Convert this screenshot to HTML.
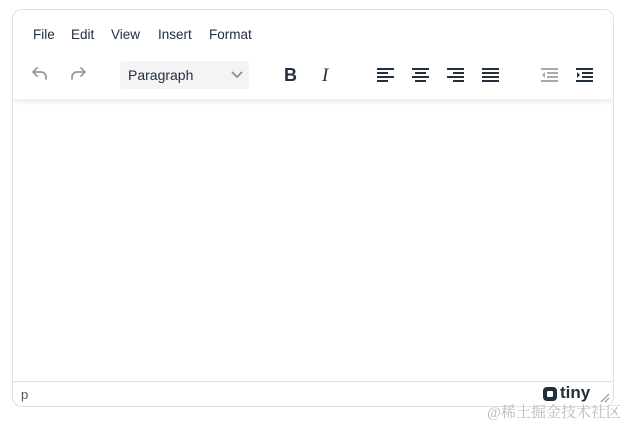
<!DOCTYPE html>
<html><head><meta charset="utf-8"><style>
body{margin:0;width:625px;height:423px;background:#fff;font-family:"Liberation Sans",sans-serif;position:relative;overflow:hidden}
.box{position:absolute;left:12px;top:9px;width:600px;height:396px;border:1px solid #e0e0e0;border-radius:10px;overflow:hidden}
.hdr{position:absolute;left:0;top:0;width:600px;height:89px;box-shadow:0 3px 5px rgba(0,0,0,.08);background:#fff}
.menu{position:absolute;top:17px;font-size:13.5px;color:#222f3e}
.sel{position:absolute;left:107px;top:51px;width:129px;height:28px;background:#f4f4f4;border-radius:3px}
.sel span{position:absolute;left:8px;top:6px;font-size:14px;color:#222f3e}
svg{position:absolute}
.status{position:absolute;left:0;top:371px;width:600px;border-top:1px solid #e0e0e0;height:25px}
.wm{position:absolute;right:4px;top:401px;font-size:15px;color:#bbb;font-family:"Liberation Serif","Noto Serif CJK SC",serif}
</style></head><body>
<div class="box">
<div class="hdr">
<div class="menu" style="left:20px">File</div>
<div class="menu" style="left:58px">Edit</div>
<div class="menu" style="left:98px">View</div>
<div class="menu" style="left:145px">Insert</div>
<div class="menu" style="left:196px">Format</div>
<svg style="left:18px;top:55px" width="20" height="20" viewBox="0 0 20 20"><path d="M6 3L2 7l4 4M2 7h8a5 5 0 0 1 5 5v2" fill="none" stroke="#999" stroke-width="1.8" stroke-linecap="round" stroke-linejoin="round"/></svg>
<svg style="left:54px;top:55px" width="20" height="20" viewBox="0 0 20 20"><path d="M14 3l4 4-4 4M18 7h-8a5 5 0 0 0-5 5v2" fill="none" stroke="#999" stroke-width="1.8" stroke-linecap="round" stroke-linejoin="round"/></svg>
<div class="sel"><span>Paragraph</span><svg style="left:111px;top:10px" width="12" height="8" viewBox="0 0 12 8"><path d="M1 1l5 5 5-5" fill="none" stroke="#888" stroke-width="1.6"/></svg></div>
<div style="position:absolute;left:271px;top:55px;font-weight:bold;font-size:18px;color:#222f3e">B</div>
<div style="position:absolute;left:309px;top:55px;font-style:italic;font-family:'Liberation Serif',serif;font-size:19px;color:#222f3e">I</div>
<svg style="left:364px;top:57px" width="18" height="16"><g fill="#222f3e"><rect x="0" y="1" width="17" height="2"/><rect x="0" y="5" width="11" height="2"/><rect x="0" y="9" width="17" height="2"/><rect x="0" y="13" width="11" height="2"/></g></svg>
<svg style="left:399px;top:57px" width="18" height="16"><g fill="#222f3e"><rect x="0" y="1" width="17" height="2"/><rect x="3" y="5" width="11" height="2"/><rect x="0" y="9" width="17" height="2"/><rect x="3" y="13" width="11" height="2"/></g></svg>
<svg style="left:434px;top:57px" width="18" height="16"><g fill="#222f3e"><rect x="0" y="1" width="17" height="2"/><rect x="6" y="5" width="11" height="2"/><rect x="0" y="9" width="17" height="2"/><rect x="6" y="13" width="11" height="2"/></g></svg>
<svg style="left:469px;top:57px" width="18" height="16"><g fill="#222f3e"><rect x="0" y="1" width="17" height="2"/><rect x="0" y="5" width="17" height="2"/><rect x="0" y="9" width="17" height="2"/><rect x="0" y="13" width="17" height="2"/></g></svg>
<svg style="left:528px;top:57px" width="18" height="16"><g fill="#aaa"><rect x="0" y="1" width="17" height="2"/><rect x="6" y="5" width="11" height="2"/><rect x="6" y="9" width="11" height="2"/><rect x="0" y="13" width="17" height="2"/><path d="M4 5L1 8l3 3z"/></g></svg>
<svg style="left:563px;top:57px" width="18" height="16"><g fill="#222f3e"><rect x="0" y="1" width="17" height="2"/><rect x="6" y="5" width="11" height="2"/><rect x="6" y="9" width="11" height="2"/><rect x="0" y="13" width="17" height="2"/><path d="M1 5l3 3-3 3z"/></g></svg>
</div>
<div class="status">
<div style="position:absolute;left:8px;top:5px;font-size:13px;color:#555">p</div>
<svg style="left:529px;top:4px" width="16" height="16" viewBox="0 0 16 16"><rect x="1" y="1" width="14" height="14" rx="4" fill="#222f3e"/><rect x="5" y="5" width="6" height="6" rx="1" fill="#fff"/></svg>
<div style="position:absolute;left:547px;top:1px;font-size:17px;font-weight:bold;color:#222f3e">tiny</div>
<svg style="left:587px;top:11px" width="10" height="10"><path d="M1 9L9 1M5 9L9 5" stroke="#888" stroke-width="1"/></svg>
</div>
</div>
<div class="wm">@稀土掘金技术社区</div>
</body></html>
